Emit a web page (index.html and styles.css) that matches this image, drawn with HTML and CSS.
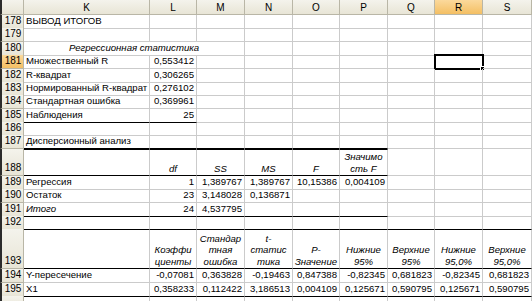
FILE: index.html
```html
<!DOCTYPE html>
<html lang="ru">
<head>
<meta charset="utf-8">
<title>Вывод итогов</title>
<link rel="stylesheet" href="styles.css">
</head>
<body>
<div class="sheet">
  <div class="row hh">
    <div class="corner"></div>
    <div class="ch">K</div><div class="ch">L</div><div class="ch">M</div><div class="ch">N</div><div class="ch">O</div><div class="ch">P</div><div class="ch">Q</div><div class="ch sel">R</div><div class="ch">S</div>
  </div>
  <div class="row h13">
    <div class="rh">178</div>
    <div class="c t">ВЫВОД ИТОГОВ</div><div class="c"></div><div class="c"></div><div class="c"></div><div class="c"></div><div class="c"></div><div class="c"></div><div class="c"></div><div class="c"></div>
  </div>
  <div class="row h14">
    <div class="rh">179</div>
    <div class="c"></div><div class="c"></div><div class="c"></div><div class="c"></div><div class="c"></div><div class="c"></div><div class="c"></div><div class="c"></div><div class="c"></div>
  </div>
  <div class="row h13">
    <div class="rh">180</div>
    <div class="c span3 hd1">Регрессионная статистика</div><div class="c"></div><div class="c"></div><div class="c"></div><div class="c"></div><div class="c"></div><div class="c"></div>
  </div>
  <div class="row h14">
    <div class="rh sel">181</div>
    <div class="c t">Множественный R</div><div class="c r">0,553412</div><div class="c"></div><div class="c"></div><div class="c"></div><div class="c"></div><div class="c"></div><div class="c active"><span class="cursor"><span class="handle"></span></span></div><div class="c"></div>
  </div>
  <div class="row h13">
    <div class="rh">182</div>
    <div class="c t">R-квадрат</div><div class="c r">0,306265</div><div class="c"></div><div class="c"></div><div class="c"></div><div class="c"></div><div class="c"></div><div class="c"></div><div class="c"></div>
  </div>
  <div class="row h13">
    <div class="rh">183</div>
    <div class="c t">Нормированный R-квадрат</div><div class="c r">0,276102</div><div class="c"></div><div class="c"></div><div class="c"></div><div class="c"></div><div class="c"></div><div class="c"></div><div class="c"></div>
  </div>
  <div class="row h14">
    <div class="rh">184</div>
    <div class="c t">Стандартная ошибка</div><div class="c r">0,369961</div><div class="c"></div><div class="c"></div><div class="c"></div><div class="c"></div><div class="c"></div><div class="c"></div><div class="c"></div>
  </div>
  <div class="row h13">
    <div class="rh">185</div>
    <div class="c t bb">Наблюдения</div><div class="c r bb">25</div><div class="c"></div><div class="c"></div><div class="c"></div><div class="c"></div><div class="c"></div><div class="c"></div><div class="c"></div>
  </div>
  <div class="row h13">
    <div class="rh">186</div>
    <div class="c bt"></div><div class="c bt"></div><div class="c"></div><div class="c"></div><div class="c"></div><div class="c"></div><div class="c"></div><div class="c"></div><div class="c"></div>
  </div>
  <div class="row h14">
    <div class="rh">187</div>
    <div class="c t bb">Дисперсионный анализ</div><div class="c bb"></div><div class="c bb"></div><div class="c bb"></div><div class="c bb"></div><div class="c bb"></div><div class="c"></div><div class="c"></div><div class="c"></div>
  </div>
  <div class="row h27">
    <div class="rh">188</div>
    <div class="c bt bb"></div><div class="c hd bt bb">df</div><div class="c hd bt bb">SS</div><div class="c hd bt bb">MS</div><div class="c hd bt bb">F</div><div class="c hd bt bb">Значимо<br>сть F</div><div class="c"></div><div class="c"></div><div class="c"></div>
  </div>
  <div class="row h13">
    <div class="rh">189</div>
    <div class="c t">Регрессия</div><div class="c r">1</div><div class="c r">1,389767</div><div class="c r">1,389767</div><div class="c r">10,15386</div><div class="c r">0,004109</div><div class="c"></div><div class="c"></div><div class="c"></div>
  </div>
  <div class="row h14">
    <div class="rh">190</div>
    <div class="c t">Остаток</div><div class="c r">23</div><div class="c r">3,148028</div><div class="c r">0,136871</div><div class="c"></div><div class="c"></div><div class="c"></div><div class="c"></div><div class="c"></div>
  </div>
  <div class="row h13">
    <div class="rh">191</div>
    <div class="c bb it">Итого</div><div class="c r bb">24</div><div class="c r bb">4,537795</div><div class="c bb"></div><div class="c bb"></div><div class="c bb"></div><div class="c"></div><div class="c"></div><div class="c"></div>
  </div>
  <div class="row h13">
    <div class="rh">192</div>
    <div class="c bt bb"></div><div class="c bt bb"></div><div class="c bt bb"></div><div class="c bt bb"></div><div class="c bt bb"></div><div class="c bt bb"></div><div class="c bb"></div><div class="c bb"></div><div class="c bb"></div>
  </div>
  <div class="row h40">
    <div class="rh">193</div>
    <div class="c bt bb"></div>
    <div class="c hd bt bb">Коэффи<br>циенты</div>
    <div class="c hd bt bb">Стандар<br>тная<br>ошибка</div>
    <div class="c hd bt bb">t-<br>статис<br>тика</div>
    <div class="c hd bt bb">P-<br>Значение</div>
    <div class="c hd bt bb">Нижние<br>95%</div>
    <div class="c hd bt bb">Верхние<br>95%</div>
    <div class="c hd bt bb">Нижние<br>95,0%</div>
    <div class="c hd bt bb">Верхние<br>95,0%</div>
  </div>
  <div class="row h14">
    <div class="rh">194</div>
    <div class="c t">Y-пересечение</div><div class="c r">-0,07081</div><div class="c r">0,363828</div><div class="c r">-0,19463</div><div class="c r">0,847388</div><div class="c r">-0,82345</div><div class="c r">0,681823</div><div class="c r">-0,82345</div><div class="c r">0,681823</div>
  </div>
  <div class="row h13">
    <div class="rh">195</div>
    <div class="c t bb">X1</div><div class="c r bb">0,358233</div><div class="c r bb">0,112422</div><div class="c r bb">3,186513</div><div class="c r bb">0,004109</div><div class="c r bb">0,125671</div><div class="c r bb">0,590795</div><div class="c r bb">0,125671</div><div class="c r bb">0,590795</div>
  </div>
  <div class="row h13">
    <div class="rh"></div>
    <div class="c bt"></div><div class="c bt"></div><div class="c bt"></div><div class="c bt"></div><div class="c bt"></div><div class="c bt"></div><div class="c bt"></div><div class="c bt"></div><div class="c bt"></div>
  </div>
</div>
</body>
</html>
```
FILE: styles.css
```css
* { box-sizing: border-box; }
html, body {
  margin: 0;
  padding: 0;
  background: #fff;
  overflow: hidden;
}
body {
  width: 532px;
  height: 301px;
  font-family: "Liberation Sans", Arial, sans-serif;
  font-size: 9.6px;
  color: #000;
}
.sheet {
  display: flex;
  flex-direction: column;
  width: 532px;
}
.row {
  display: grid;
  grid-template-columns: 24px 126px 47px 48px 48px 47px 48px 47px 48px 49px;
  flex: none;
}
.hh { height: 15px; }
.h13 { height: 13px; }
.h14 { height: 14px; }
.h27 { height: 27px; }
.h40 { height: 40px; }

.corner, .ch, .rh {
  background: linear-gradient(#f4f3ec, #e8e5d6);
  border-right: 1px solid #b9b6a6;
  border-bottom: 1px solid #b9b6a6;
  color: #000;
}
.corner, .rh { border-left: 2px solid #2b2b2b; }
.ch {
  display: flex;
  align-items: center;
  justify-content: center;
  padding-top: 1px;
  font-size: 10px;
}
.rh {
  display: flex;
  align-items: flex-end;
  justify-content: center;
  padding: 0 0 1px 1px;
  line-height: 12px;
  font-size: 10px;
}
.ch.sel, .rh.sel {
  background: linear-gradient(#fbd99c, #f4bf63);
}

.c {
  position: relative;
  display: flex;
  align-items: flex-end;
  padding: 0 2px 1px 2px;
  line-height: 12px;
  white-space: nowrap;
  border-right: 1px solid #cbcbcb;
  border-bottom: 1px solid #cbcbcb;
}
.t { letter-spacing: 0; }
.r { justify-content: flex-end; }
.it { font-style: italic; }
.span3 { grid-column: span 3; }
.hd1 {
  justify-content: center;
  font-style: italic;
}
.hd {
  justify-content: center;
  text-align: center;
  font-style: italic;
  line-height: 11.5px;
}
.bb { border-bottom-color: #000; }
.bt { border-top: 1px solid #000; }

.cursor {
  position: absolute;
  left: -1px;
  top: -1px;
  width: 50px;
  height: 16px;
  border: 2px solid #000;
}
.handle {
  position: absolute;
  right: -3px;
  bottom: -3px;
  width: 5px;
  height: 5px;
  background: #000;
  border: 1px solid #fff;
}
```
